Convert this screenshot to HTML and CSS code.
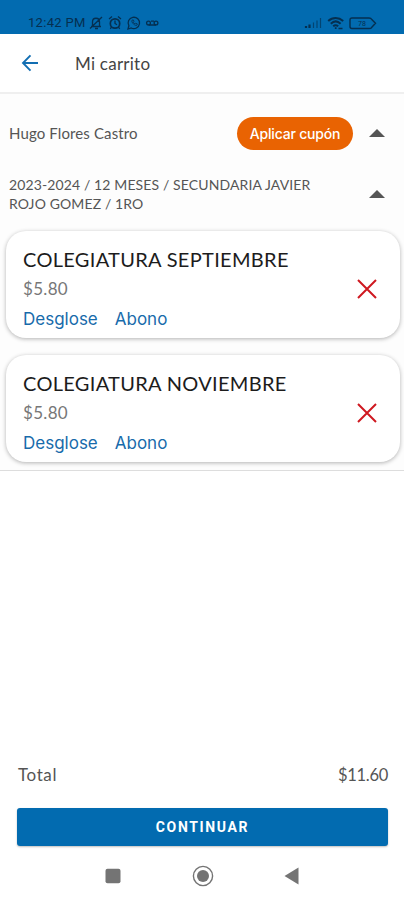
FILE: index.html
```html
<!DOCTYPE html>
<html lang="es">
<head>
<meta charset="utf-8">
<title>Mi carrito</title>
<link rel="stylesheet" href="styles.css">
</head>
<body>
<div class="status">
  <span class="clock">12:42 PM</span>
  <svg class="notices" width="72" height="16" viewBox="0 0 72 16" fill="none" stroke="currentColor" stroke-width="1.3">
    <path d="M2 11.500h10M3.500 11V7c0-5 7-5 7 0v4M6 13.500h3M1 13.500 13 2"/>
    <circle cx="26" cy="8.5" r="4.7" stroke-width="1.7"/><path d="M26 5.500v3l2 1.200M20 4l3-2.400M32 4l-3-2.400M22.500 12l-1.200 1.800M29.500 12l1.200 1.800"/>
    <path d="m39 14 .9-3.200a5.700 5.700 0 1 1 2.300 2.200z"/><path d="M43 5.200c-1 2 2.700 6 5 5l.3-1.300-1.600-.8-.8.8-1.700-1.700.8-.9-.7-1.400z" stroke-width=".8"/>
    <circle cx="59.500" cy="8" r="1.900"/><circle cx="67" cy="8" r="1.900"/><path d="M59.500 10H67M62 6.200h3"/>
  </svg>
  <svg class="signals" width="74" height="16" viewBox="0 0 74 16" fill="none" stroke="currentColor">
    <path d="M3 13v-2M6.500 13V9.500" stroke-width="2.200"/><path d="M10.500 13V7.500M14 13V5.500M17.500 13V3" stroke-width="1.200" opacity=".65"/>
    <path d="M25.200 6.100c4.400-4 10.500-4 15 0M27.800 8.700c3-2.800 6.800-2.800 9.800 0M30.200 11.300c1.500-1.300 3.500-1.300 5 0" stroke-width="2"/><path d="M32.700 14v-1.800M35.500 13.500h4" stroke-width="1.700"/>
    <path d="M49 3h17q2 0 2.800 1.500L72.500 8.200l-3.700 4.100Q68 13.500 66 13.500H49q-2 0-2-2V5q0-2 2-2z" stroke-width="1.400"/>
    <text x="55" y="11" class="level">78</text>
  </svg>
</div>
<header class="bar">
  <svg width="18" height="18" viewBox="0 0 18 18" fill="none" stroke="#126eb2" stroke-width="1.9"><path d="M17 9H2M9.500 1.300 2 9l7.500 7.700"/></svg>
  <h1>Mi carrito</h1>
</header>
<main class="cart">
  <div class="student">
    <span class="name">Hugo Flores Castro</span>
    <button class="coupon">Aplicar cupón</button>
    <i class="caret"></i>
  </div>
  <div class="school">
    <p>2023-2024 / 12 MESES / SECUNDARIA JAVIER<br>ROJO GOMEZ / 1RO</p>
    <i class="caret"></i>
  </div>
  <section class="card">
    <div>
      <h2>COLEGIATURA SEPTIEMBRE</h2>
      <p class="price">$5.80</p>
      <p class="links"><a>Desglose</a><a>Abono</a></p>
    </div>
    <svg class="remove" width="20" height="20" viewBox="0 0 20 20"><path d="m1 1 18 18M19 1 1 19"/></svg>
  </section>
  <section class="card">
    <div>
      <h2>COLEGIATURA NOVIEMBRE</h2>
      <p class="price">$5.80</p>
      <p class="links"><a>Desglose</a><a>Abono</a></p>
    </div>
    <svg class="remove" width="20" height="20" viewBox="0 0 20 20"><path d="m1 1 18 18M19 1 1 19"/></svg>
  </section>
</main>
<footer>
  <div class="total"><span class="label">Total</span><span class="amount">$11.60</span></div>
  <button class="continue">CONTINUAR</button>
  <nav>
    <svg width="16" height="16" viewBox="0 0 16 16"><rect x=".5" y=".8" width="15" height="14.500" rx="2" fill="#747474"/></svg>
    <svg width="22" height="22" viewBox="0 0 22 22"><circle cx="11" cy="11" r="9.600" fill="none" stroke="#747474" stroke-width="1.400"/><circle cx="11" cy="11" r="6" fill="#747474"/></svg>
    <svg width="16" height="18" viewBox="0 0 16 18"><path d="M14.500 .5v17L.5 9z" fill="#747474"/></svg>
  </nav>
</footer>
</body>
</html>
```
FILE: styles.css
```css
* { box-sizing: border-box; margin: 0; padding: 0; }
body { width: 404px; height: 900px; display: flex; flex-direction: column; background: #fff; color: #555; font-family: Lato, sans-serif; overflow: hidden; }
button { border: 0; color: #fff; font-family: inherit; }
.status { height: 34px; flex: none; display: flex; align-items: center; padding: 11px 27px 0 28px; background: #026bb0; color: #052f50; }
.clock { width: 58px; white-space: nowrap; font: 400 13px/16px Roboto, sans-serif; letter-spacing: .3px; }
.notices { margin-left: 3px; }
.signals { margin-left: auto; }
.level { font: 7px Roboto, sans-serif; fill: currentColor; stroke: none; }
.bar { height: 60px; flex: none; display: flex; align-items: center; padding-left: 21px; border-bottom: 2px solid #efefef; }
.bar h1 { margin-left: 36px; font-size: 17px; font-weight: 400; letter-spacing: .25px; color: #444; }
.cart { height: 377px; flex: none; border-bottom: 1px solid #ddd; background: #fdfdfd; }
.student { height: 78px; display: flex; align-items: center; padding: 0 19px 0 9px; }
.name { font-size: 15px; letter-spacing: .12px; }
.coupon { width: 116px; height: 33px; margin-left: auto; border-radius: 17px; background: #e96302; font: 500 14px/33px Inter, sans-serif; letter-spacing: -.2px; }
.caret { width: 16px; height: 8px; margin-left: 16px; background: #555; clip-path: polygon(50% 0, 100% 100%, 0 100%); }
.school { height: 59px; display: flex; align-items: center; justify-content: space-between; padding: 0 19px 15px 9px; }
.school p { font-size: 14px; line-height: 18.5px; letter-spacing: .12px; white-space: nowrap; padding-top: 1px; }
.school .caret { margin-left: 0; }
.card { height: 107px; margin: 0 4px 17px 6px; padding: 16px 23px 0 17px; display: flex; justify-content: space-between; border-radius: 20px; background: #fff; box-shadow: 0 1px 4px rgba(0,0,0,.3); }
.card h2 { font-size: 20px; line-height: 24px; font-weight: 400; letter-spacing: .31px; color: #1c1c1c; white-space: nowrap; }
.price { font-size: 17px; line-height: 22px; margin-top: 7px; letter-spacing: .3px; color: #777; }
.links { display: flex; gap: 17px; margin-top: 7px; font: 400 17px/24px Inter, sans-serif; color: #186bab; }
.remove { margin-top: 32px; fill: none; stroke: #cf1820; stroke-width: 2; }
footer { flex: 1; display: flex; flex-direction: column; justify-content: flex-end; padding: 0 16px 12px 17px; }
.total { display: flex; justify-content: space-between; padding-left: 1px; font-size: 17px; line-height: 22px; color: #555; }
.label { letter-spacing: .6px; }
.amount { font-size: 16.5px; letter-spacing: -.3px; }
.continue { height: 38px; margin-top: 22px; border-radius: 3px; background: #026bb0; box-shadow: 0 1px 2px rgba(0,0,0,.25); font: 700 14px/38px Roboto, sans-serif; letter-spacing: 1.65px; }
nav { height: 24px; margin-top: 18px; padding: 0 88px; display: flex; align-items: center; justify-content: space-between; }
```
